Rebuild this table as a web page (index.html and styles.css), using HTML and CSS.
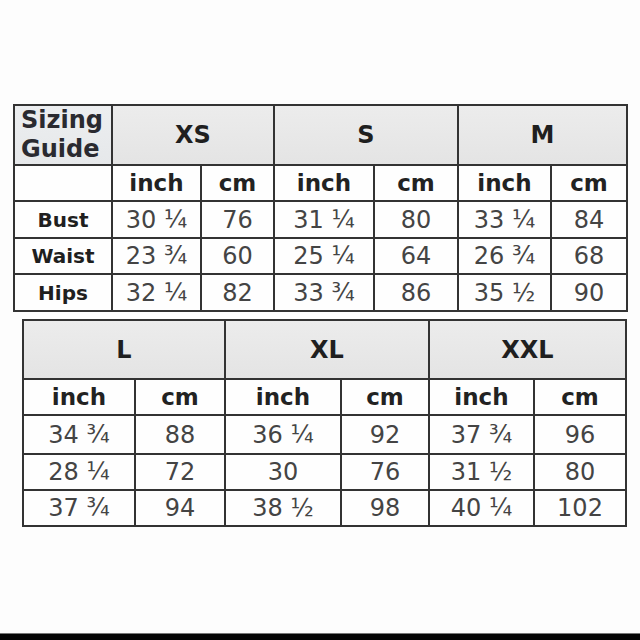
FILE: index.html
```html
<!DOCTYPE html>
<html>
<head>
<meta charset="utf-8">
<link rel="stylesheet" href="styles.css">
</head>
<body>
<div class="page">
  <div class="chart chart-top">
    <div class="cell head corner">Sizing<br>Guide</div>
    <div class="cell head size span2">XS</div>
    <div class="cell head size span2">S</div>
    <div class="cell head size span2">M</div>

    <div class="cell unit blank"></div>
    <div class="cell unit">inch</div><div class="cell unit">cm</div>
    <div class="cell unit">inch</div><div class="cell unit">cm</div>
    <div class="cell unit">inch</div><div class="cell unit">cm</div>

    <div class="cell label">Bust</div>
    <div class="cell val">30 ¼</div><div class="cell val">76</div>
    <div class="cell val">31 ¼</div><div class="cell val">80</div>
    <div class="cell val">33 ¼</div><div class="cell val">84</div>

    <div class="cell label">Waist</div>
    <div class="cell val">23 ¾</div><div class="cell val">60</div>
    <div class="cell val">25 ¼</div><div class="cell val">64</div>
    <div class="cell val">26 ¾</div><div class="cell val">68</div>

    <div class="cell label">Hips</div>
    <div class="cell val">32 ¼</div><div class="cell val">82</div>
    <div class="cell val">33 ¾</div><div class="cell val">86</div>
    <div class="cell val">35 ½</div><div class="cell val">90</div>
  </div>

  <div class="chart chart-bottom">
    <div class="cell head size span2">L</div>
    <div class="cell head size span2">XL</div>
    <div class="cell head size span2">XXL</div>

    <div class="cell unit">inch</div><div class="cell unit">cm</div>
    <div class="cell unit">inch</div><div class="cell unit">cm</div>
    <div class="cell unit">inch</div><div class="cell unit">cm</div>

    <div class="cell val">34 ¾</div><div class="cell val">88</div>
    <div class="cell val">36 ¼</div><div class="cell val">92</div>
    <div class="cell val">37 ¾</div><div class="cell val">96</div>

    <div class="cell val">28 ¼</div><div class="cell val">72</div>
    <div class="cell val">30</div><div class="cell val">76</div>
    <div class="cell val">31 ½</div><div class="cell val">80</div>

    <div class="cell val">37 ¾</div><div class="cell val">94</div>
    <div class="cell val">38 ½</div><div class="cell val">98</div>
    <div class="cell val">40 ¼</div><div class="cell val">102</div>
  </div>

  <div class="bottom-bar"></div>
</div>
</body>
</html>
```
FILE: styles.css
```css
html, body {
  margin: 0;
  padding: 0;
  background: #fdfdfd;
}

.page {
  width: 640px;
  height: 640px;
  display: flex;
  flex-direction: column;
  font-family: "DejaVu Sans", Verdana, sans-serif;
  overflow: hidden;
}

.chart {
  display: grid;
  gap: 2px;
  padding: 2px;
  background: #333;
  align-self: flex-start;
}

.chart-top {
  margin: 104px 0 0 13px;
  grid-template-columns: 96px 87px 71px 98px 82px 91px 74px;
  grid-template-rows: 58px 34px 35px 34px 35px;
}

.chart-bottom {
  margin: 7px 0 0 22px;
  grid-template-columns: 110px 88px 114px 86px 103px 90px;
  grid-template-rows: 57px 34px 37px 34px 34px;
}

.cell {
  display: flex;
  align-items: center;
  justify-content: center;
  background: #fefefe;
  line-height: 1;
}

.span2 {
  grid-column: span 2;
}

.head {
  background: linear-gradient(#ececec, #e4e4e4);
  color: #1f1f1f;
  font-weight: bold;
  font-size: 24px;
}

.corner {
  justify-content: flex-start;
  padding-left: 6px;
  font-size: 24px;
  line-height: 29px;
  background: linear-gradient(#eceef0, #e6e8ea);
  color: #2a2a30;
}

.unit {
  font-weight: bold;
  font-size: 23px;
  color: #222;
}

.label {
  font-weight: bold;
  font-size: 20px;
  color: #1f1f1f;
}

.val {
  font-size: 24px;
  color: #444;
}

.bottom-bar {
  margin-top: auto;
  height: 6px;
  background: #050505;
  border-top: 1px solid #777;
}
```
